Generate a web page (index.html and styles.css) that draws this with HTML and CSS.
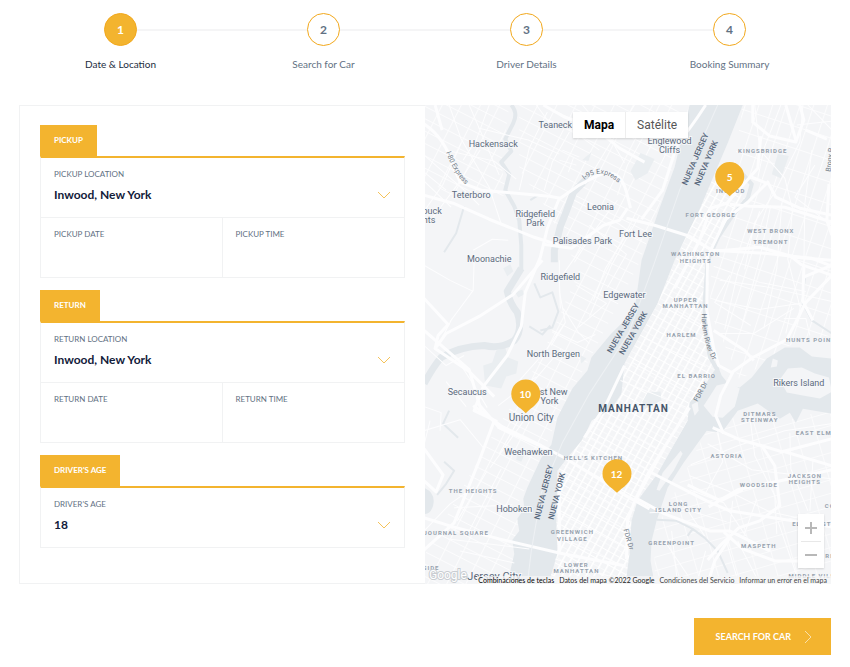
FILE: index.html
```html
<!DOCTYPE html>
<html lang="en">
<head>
<meta charset="utf-8">
<meta name="viewport" content="width=device-width, initial-scale=1">
<title>Car rental booking</title>
<link rel="stylesheet" href="styles.css">
</head>
<body>
<main class="booking">
  <ol class="steps">
    <li class="step step-active"><span class="step-number">1</span><span class="step-name">Date &amp; Location</span></li>
    <li class="step"><span class="step-number">2</span><span class="step-name">Search for Car</span></li>
    <li class="step"><span class="step-number">3</span><span class="step-name">Driver Details</span></li>
    <li class="step"><span class="step-number">4</span><span class="step-name">Booking Summary</span></li>
  </ol>

  <form class="booking-form">
    <div class="panel">
      <div class="fields">
        <section class="group">
          <h2 class="group-title">Pickup</h2>
          <div class="group-body">
            <div class="field field-wide">
              <label for="pickup-location">Pickup location</label>
              <select id="pickup-location"><option>Inwood, New York</option></select>
              <svg class="chevron" viewBox="0 0 14 8" aria-hidden="true"><path d="M1 1l6 6 6-6"/></svg>
            </div>
            <div class="field"><label for="pickup-date">Pickup date</label><input id="pickup-date" type="text"></div>
            <div class="field"><label for="pickup-time">Pickup time</label><input id="pickup-time" type="text"></div>
          </div>
        </section>
        <section class="group">
          <h2 class="group-title">Return</h2>
          <div class="group-body">
            <div class="field field-wide">
              <label for="return-location">Return location</label>
              <select id="return-location"><option>Inwood, New York</option></select>
              <svg class="chevron" viewBox="0 0 14 8" aria-hidden="true"><path d="M1 1l6 6 6-6"/></svg>
            </div>
            <div class="field"><label for="return-date">Return date</label><input id="return-date" type="text"></div>
            <div class="field"><label for="return-time">Return time</label><input id="return-time" type="text"></div>
          </div>
        </section>
        <section class="group">
          <h2 class="group-title">Driver's age</h2>
          <div class="group-body">
            <div class="field field-wide">
              <label for="driver-age">Driver's age</label>
              <select id="driver-age"><option>18</option></select>
              <svg class="chevron" viewBox="0 0 14 8" aria-hidden="true"><path d="M1 1l6 6 6-6"/></svg>
            </div>
          </div>
        </section>
      </div>

      <div class="map">
        <svg class="map-canvas" viewBox="425 105 407 478" preserveAspectRatio="xMidYMid slice">
          <defs>
            <pattern id="avenues" width="7" height="12" patternUnits="userSpaceOnUse" patternTransform="rotate(29)">
              <path d="M0 0V12" stroke="#fff" stroke-width="3"/><path d="M0 0H7M0 6H7" stroke="#fff" stroke-width="1"/>
            </pattern>
            <pattern id="blocks" width="17" height="11" patternUnits="userSpaceOnUse" patternTransform="rotate(27)">
              <path d="M0 0V11M0 0H17" stroke="#fcfcfd" stroke-width="2"/>
            </pattern>
            <pattern id="bronx" width="13" height="21" patternUnits="userSpaceOnUse" patternTransform="rotate(18)">
              <path d="M0 0V21M0 0H13" stroke="#fcfcfd" stroke-width="2"/>
            </pattern>
            <pattern id="queens" width="19" height="13" patternUnits="userSpaceOnUse" patternTransform="rotate(-16)">
              <path d="M0 0V13M0 0H19" stroke="#fbfbfc" stroke-width="2"/>
            </pattern>
            <path id="i95" d="M585 180Q601 166 619 183"/>
            <path id="i80" d="M447 152Q454 172 466 184"/>
            <path id="harlem-drive" d="M702 313Q702 341 714 361"/>
          </defs>

          <rect class="land" x="425" y="105" width="407" height="478"/>

          <path fill="url(#blocks)" d="M425 105H510L502 165 508 195 455 200 425 175ZM520 105H690L672 170 640 262 600 340 558 417 542 457 520 500 515 583H425V555L490 440 540 360 580 270 545 205 520 170Z"/>
          <path fill="url(#bronx)" d="M743 105H832V335L790 345 740 380 710 310 712 255 752 183 735 160Z"/>
          <path fill="url(#queens)" d="M707 430L740 411 785 420 832 408V583H655V530Z"/>
          <path fill="url(#avenues)" d="M712 180L735 160 742 195 710 258 707 330 718 370 690 405 688 425 658 473 638 500 628 583H549L558 470 582 440 625 363 675 260Z"/>

          <g class="marsh">
            <path d="M484 365l9-3 4-12 9-3 3 10 10 4-2 12-10 3-5 12-16-3z"/>
            <path d="M504 268l7-4 3 7-6 5z"/>
            <path d="M641 153l14 6-7 14-12 7-5-9z"/>
            <path d="M778 154l11 2-8 22-9-4z"/>
            <path d="M648 392l13-1 1 9-18 9-1-8z"/>
            <path d="M583 160l9-8-3 9zM516 292l7-3 2 5-6 3zM580 354l7 4-5 5zM518 453l7 1-3 7-5-2z"/>
          </g>

          <g class="water">
            <path d="M690 105H743L728 143 713 178 700 209 688 233 675 260 658 303 625 363 622 393 612 408 592 420 587 431 582 440 568 457 558 470 557 520 558 553 549 583H515L511 570 515 553 513 539 520 530 518 518 525 508 524 498 528 487 542 457 552 444 558 417 573 388 588 370 592 357 611 334 635 310 642 260 660 208 675 167Z"/>
            <path d="M718 365L707 382 690 402 688 420 672 448 658 473 638 500 632 520 630 553 626 583H655L651 560 652 540 657 520 668 487 684 462 707 430 722 432 738 410 758 403 780 418 790 412 796 422 803 408 832 413V358L812 356 800 347 785 347 767 358 752 377 740 387 730 385 722 375Z"/>
            <path d="M425 487q12 5 9 18-3 9-9 8z"/>
          </g>
          <g class="river">
            <path class="river-wide" d="M522 268L508 291Q510 302 518 312 524 329 515 340 501 349 485 345 460 346 442 357 435 365 425 383"/>
            <path d="M512 105Q519 113 514 123L506 139 512 151 502 162 510 174 506 190 515 206 520 220 522 245 522 270"/>
            <path class="river-wide" d="M590 176L574 192 567 211 561 226 555 250 555 262"/>
            <path d="M718 370L710 356 706 331 705 302 708 260 719 236 733 215 748 198 752 184 742 173 727 177"/>
            <path class="stream" d="M805 278L802 301 812 320 832 333M657 519L677 520 693 528 705 537 718 550 728 572M693 528L688 535M535 283l6 14 12-5 6 19-6 16-12 3M551 325l-8 9-13-8M445 461l10 9-8 13-9 11M450 410l-6 13 15 14M539 195l-8 5M465 206l-8 27-12 19"/>
          </g>

          <g class="land">
            <path d="M717 385l13-3 10 6-5 18-12 11-10-1-9-11z"/>
            <path d="M780 379l8-11 14-1 13 6 14 4 3 14-12 7-17-3-16-3z"/>
            <path d="M773 358l5 2-1 6-6 1z"/>
            <path d="M681 450l2 3-9 17-14 20-3-1 6-17z"/>
            <path d="M692 404l6-3 1 9-4 5z"/>
          </g>

          <g class="street">
            <path d="M425 172L447 190M425 181L452 207M425 155L465 190 480 205M425 211L444 184 462 143M434 217L458 185 481 150M450 105L462 139 490 187 502 224M470 105L486 142 500 175M490 105L477 140 464 160M446 150L495 161 517 179M479 128L529 140 560 154M520 190L530 148 548 112M545 190L553 162 570 132M560 160L577 165M563 150L580 157M569 172L574 158"/>
            <path d="M537 105L548 120 572 130 600 150M583 105L610 137 625 163M635 105L606 151 586 184M660 105L642 140 628 165 618 195M575 200L620 224 642 240M618 200L596 229 575 262M610 210L585 244 560 279 561 308M590 225L627 254 608 287M640 215L612 265 590 316M632 226L606 268 594 300"/>
            <path d="M560 260L560 291 566 322 552 345M564 308L579 332 590 343M577 285L607 303 579 327M553 330L578 342 596 334M520 380L545 352 566 322M529 387L562 348M499 405L537 376M500 453L536 390M491 467L526 418M458 520L488 470M470 530L502 468M455 507L513 504M449 538L530 548M461 550L515 562M425 530L451 503 475 486M425 430L461 419 485 448M431 420L425 444M425 406L442 412 441 430"/>
            <path d="M425 265L451 280 474 291M475 259L474 290 451 321M474 250L493 239 509 240M425 345L447 365 465 355M462 365L473 382 488 407M439 345L453 318M447 381L467 406"/>
            <path d="M755 105L760 150 785 178 792 207M781 105L764 149 758 178M803 105L800 142 775 192 755 222 745 269M760 211L738 272 725 329M771 205L760 258 743 322M782 203L777 268 764 328M793 205L788 259 800 306M812 150L805 203 804 265M724 218L712 250M714 266L760 282 806 291M716 300L760 309 800 303M717 333L754 333 794 308M730 275L715 302 751 325"/>
            <path d="M808 105L832 130M797 125L832 121M815 165L795 197 832 225M720 280L764 286 832 301M784 318L806 318 810 335M792 306L786 333M804 288L797 324"/>
            <path d="M691 464L738 445 785 430 832 423M690 475L728 490 770 511 812 520M690 489L724 502 746 535M681 499L705 535M708 443L752 469 832 478M750 415L755 455 775 495 777 533M718 430L723 461 706 492M733 500L728 545 739 583M757 498L744 535M790 432L791 468 808 510M813 460L810 510M665 540L694 583M672 530L678 583M706 550L697 583M738 540L760 583M778 520L797 575M650 512L690 510 727 521"/>
            <path d="M561 474L624 510M558 491L628 530M558 511L626 547M558 535L628 567M556 558L625 580M583 446L643 481M590 436L650 470M606 420L657 448M621 380L690 408M633 362L690 393M646 338L706 366M666 304L708 328"/>
          </g>

          <g class="highway">
            <path d="M425 124Q446 138 454 166L461 182 482 190 550 196 561 198 578 186 597 176Q620 165 627 192L631 208"/>
            <path d="M436 105L443 130M425 195L454 203 490 219 535 237 560 245"/>
            <path d="M544 105L565 117 594 127 620 148 645 162"/>
            <path d="M560 198L548 228 541 257 526 292 522 326 508 355 484 386 475 410 498 421"/>
            <path d="M628 208L620 220 604 225 572 248 544 244M627 218L655 225 690 236 714 251 760 247 795 257 832 260"/>
            <path d="M543 260L514 294 480 316 447 333 436 348 470 371 495 396M436 348L439 335 449 324 425 298M425 330L470 369 482 410"/>
            <path d="M474 405L503 426 542 445 565 457 625 494 650 508"/>
            <path d="M479 403L500 427 545 447M495 420L480 460 455 522 425 549M425 480L437 491 444 474 425 448"/>
            <path d="M425 517L454 526 500 538 560 552 626 565"/>
            <path d="M706 105Q690 130 678 143L663 190 642 219"/>
            <path d="M753 105V122L770 136 796 142 804 120 800 105M761 136L758 168 727 203 711 208 700 240 675 288"/>
            <path d="M752 177L769 184 776 197 800 208 832 215M769 181L748 202 726 219 708 256 707 309 714 348 719 365 732 372 753 357 787 339 806 302 832 275"/>
            <path d="M730 204L750 206 785 207 832 222M713 250L765 253 812 258 832 266M829 184L827 220 832 235"/>
            <path d="M786 105L796 140M806 130L827 139M804 265L803 301 813 320M803 277L832 265M790 255L801 264 832 275"/>
            <path d="M714 330L745 350 754 360M733 372L721 395 716 415 724 433"/>
            <path d="M713 427L740 439 762 445 782 451 832 438M762 445L775 465 780 505 760 520 739 527 720 545 708 559"/>
            <path d="M650 471L707 500 730 510 832 526M636 497L665 513 710 530 730 530 770 550M709 506L738 489 832 469"/>
            <path d="M730 537L715 560 708 583M724 531L743 548 775 560 805 560M688 484L721 500 743 489M785 451L832 465"/>
            <path d="M690 407L670 438 649 472 636 498 628 520 627 558"/>
            <path d="M625 365L606 405 585 437M560 475L560 550"/>
          </g>
          <path class="state-line" d="M718 105L680 190 654 265 629 333 590 393 563 442 542 492 532 550 528 583"/>

          <g class="town">
            <text x="556" y="128">Teaneck</text>
            <text x="494" y="147">Hackensack</text>
            <text x="670" y="144">Englewood</text><text x="670" y="153">Cliffs</text>
            <text x="472" y="198">Teterboro</text>
            <text x="601" y="210">Leonia</text>
            <text x="433" y="214">buck</text><text x="430" y="223">hts</text>
            <text x="536" y="217">Ridgefield</text><text x="536" y="226">Park</text>
            <text x="636" y="237">Fort Lee</text>
            <text x="583" y="244">Palisades Park</text>
            <text x="490" y="262">Moonachie</text>
            <text x="561" y="280">Ridgefield</text>
            <text x="625" y="298">Edgewater</text>
            <text x="554" y="356">North Bergen</text>
            <text x="468" y="394">Secaucus</text>
            <text x="548" y="394">West New</text><text x="550" y="403">York</text>
            <text x="529" y="454">Weehawken</text>
            <text x="515" y="511">Hoboken</text>
            <text x="799" y="385">Rikers Island</text>
            <text class="town-large" x="532" y="420">Union City</text>
            <text class="city" x="495" y="579">Jersey City</text>
          </g>
          <g class="district">
            <text x="763" y="153">KINGSBRIDGE</text>
            <text x="731" y="193">INWOOD</text>
            <text x="711" y="217">FORT GEORGE</text>
            <text x="771" y="233">WEST BRONX</text>
            <text x="771" y="244">TREMONT</text>
            <text x="696" y="256">WASHINGTON</text><text x="696" y="263">HEIGHTS</text>
            <text x="686" y="302">UPPER</text><text x="686" y="308">MANHATTAN</text>
            <text x="682" y="337">HARLEM</text>
            <text x="811" y="342">HUNTS POINT</text>
            <text x="697" y="377">EL BARRIO</text>
            <text x="760" y="415">DITMARS</text><text x="760" y="421">STEINWAY</text>
            <text x="826" y="434">EAST ELMHURST</text>
            <text x="727" y="457">ASTORIA</text>
            <text x="594" y="459">HELL'S KITCHEN</text>
            <text x="805" y="477">JACKSON</text><text x="805" y="483">HEIGHTS</text>
            <text x="759" y="486">WOODSIDE</text>
            <text x="474" y="492">THE HEIGHTS</text>
            <text x="679" y="505">LONG</text><text x="679" y="511">ISLAND CITY</text>
            <text x="812" y="525">ELMHURST</text>
            <text x="457" y="534">JOURNAL SQUARE</text>
            <text x="573" y="533">GREENWICH</text><text x="573" y="540">VILLAGE</text>
            <text x="672" y="544">GREENPOINT</text>
            <text x="759" y="547">MASPETH</text>
            <text x="577" y="566">LOWER</text><text x="577" y="572">MANHATTAN</text>
            <text x="432" y="569">SIDE</text>
            <text x="830" y="507">CO</text>
            <text x="830" y="557">RE</text>
            <text x="819" y="577">MIDDLE VILLAGE</text>
          </g>
          <text class="borough" x="634" y="411">MANHATTAN</text>
          <g class="state">
            <text transform="translate(698 160) rotate(-67)">NUEVA JERSEY</text>
            <text transform="translate(709 164) rotate(-67)">NUEVA YORK</text>
            <text transform="translate(626 329) rotate(-60)">NUEVA JERSEY</text>
            <text transform="translate(636 334) rotate(-60)">NUEVA YORK</text>
            <text transform="translate(547 492) rotate(-76)">NUEVA JERSEY</text>
            <text transform="translate(560 496) rotate(-76)">NUEVA YORK</text>
          </g>
          <g class="road-name">
            <text><textPath href="#i95">I-95 Express</textPath></text>
            <text><textPath href="#i80">I-80 Express</textPath></text>
            <text><textPath href="#harlem-drive">Harlem River Dr</textPath></text>
            <text class="road-straight" transform="translate(703 392) rotate(-62)">FDR Dr</text>
            <text class="road-straight" transform="translate(627 539) rotate(74)">FDR Dr</text>
            <text class="road-straight" transform="translate(832 160) rotate(-83)">Bronx R</text>
          </g>

          <g class="pin">
            <path d="M730 196C724 190 715.500 186 715.500 176.500A14.500 14.500 0 0 1 744.500 176.500C744.500 186 736 190 730 196Z"/><text x="730" y="181">5</text>
            <path d="M526.500 412.500C520.500 406.500 512 403 512 393.500A14.500 14.500 0 0 1 541 393.500C541 403 532.500 406.500 526.500 412.500Z"/><text x="526" y="397">10</text>
            <path d="M617.500 492C611.500 486 603 482.500 603 473A14.500 14.500 0 0 1 632 473C632 482.500 623.500 486 617.500 492Z"/><text x="617" y="477">12</text>
          </g>
        </svg>

        <div class="map-types">
          <button class="map-type map-type-active" type="button">Mapa</button>
          <button class="map-type" type="button">Satélite</button>
        </div>
        <div class="map-zoom">
          <button type="button" aria-label="Zoom in"><svg viewBox="0 0 14 14"><path d="M7 1V13M1 7H13"/></svg></button>
          <button type="button" aria-label="Zoom out"><svg viewBox="0 0 14 14"><path d="M1 7H13"/></svg></button>
        </div>
        <span class="map-logo">Google</span>
        <div class="map-credits">
          <button type="button">Combinaciones de teclas</button>
          <span>Datos del mapa ©2022 Google</span>
          <a href="#">Condiciones del Servicio</a>
          <a href="#">Informar un error en el mapa</a>
        </div>
      </div>
    </div>

    <div class="actions">
      <button class="submit" type="submit">Search for car
        <svg viewBox="0 0 8 14" aria-hidden="true"><path d="M1 1l6 6-6 6"/></svg>
      </button>
    </div>
  </form>
</main>
</body>
</html>
```
FILE: styles.css
```css
* {
  box-sizing: border-box;
}

body {
  margin: 0;
  background: #fff;
  color: #627183;
  font-family: Lato, "Liberation Sans", sans-serif;
}

button,
input,
select {
  font-family: inherit;
  border: 0;
  border-radius: 0;
  padding: 0;
  background: none;
}

button {
  cursor: pointer;
}

.booking {
  padding: 13px 19px;
}

/* Progress steps */
.steps {
  display: grid;
  grid-template-columns: repeat(4, 1fr);
  margin: 0;
  padding: 0;
  list-style: none;
}

.step {
  display: grid;
  grid-template-columns: 1fr 33px 1fr;
  align-items: center;
  row-gap: 10px;
}

.step::before,
.step::after {
  content: "";
  height: 2px;
  grid-row: 1;
  background: #f5f5f6;
}

.step::before {
  grid-column: 1;
}

.step::after {
  grid-column: 3;
}

.step:first-child::before,
.step:last-child::after {
  visibility: hidden;
}

.step-number {
  grid-area: 1 / 2;
  height: 33px;
  border: 1px solid #f2a81c;
  border-radius: 50%;
  font-size: 12px;
  font-weight: 700;
  line-height: 32px;
  text-align: center;
}

.step-name {
  grid-area: 2 / 1 / 3 / 4;
  font-size: 10px;
  line-height: 16px;
  text-align: center;
}

.step-active .step-number {
  background: #f3b42f;
  color: #fff;
}

.step-active .step-name {
  color: #1c2c40;
}

/* Booking panel */
.panel {
  display: grid;
  grid-template-columns: 1fr 1fr;
  margin-top: 33px;
}

.fields {
  display: flex;
  flex-direction: column;
  gap: 12px;
  padding: 19px 20px 35px;
  border: 1px solid #f1f2f3;
  border-right: 0;
}

.group-title {
  width: fit-content;
  margin: 0;
  padding: 0 14px;
  background: #f3b42f;
  color: #fff;
  font-size: 8px;
  font-weight: 700;
  line-height: 31px;
  text-transform: uppercase;
}

.group-body {
  display: grid;
  grid-template-columns: 1fr 1fr;
  border: 1px solid #f1f2f3;
  border-top: 2px solid #f3b42f;
  border-bottom: 0;
}

.field {
  position: relative;
  display: flex;
  flex-direction: column;
  gap: 6px;
  padding: 10px 13px 14px;
  border-bottom: 1px solid #f1f2f3;
}

.field-wide {
  grid-column: 1 / -1;
}

.field-wide + .field {
  border-right: 1px solid #f1f2f3;
}

.field label {
  font-size: 8px;
  line-height: 12px;
  text-transform: uppercase;
}

.field input,
.field select {
  width: 100%;
  height: 17px;
  appearance: none;
  color: #12203a;
  font-size: 12px;
  font-weight: 700;
  line-height: 17px;
}

.chevron {
  position: absolute;
  right: 13px;
  bottom: 18px;
  width: 14px;
  height: 8px;
  fill: none;
  stroke: #f5c35a;
  pointer-events: none;
}

/* Map */
.map {
  position: relative;
  overflow: hidden;
  font-family: Roboto, "Liberation Sans", sans-serif;
}

.map-canvas {
  position: absolute;
  inset: 0;
  width: 100%;
  height: 100%;
}

.land {
  fill: #f4f5f7;
}

.marsh {
  fill: #eaeef1;
}

.water {
  fill: #e3e8ec;
}

.river {
  fill: none;
  stroke: #e3e8ec;
  stroke-width: 4;
  stroke-linejoin: round;
}

.river-wide {
  stroke-width: 7;
}

.stream {
  stroke-width: 2;
}

.street,
.highway {
  fill: none;
  stroke: #fdfdfe;
  stroke-linejoin: round;
}

.street {
  stroke-width: 1;
}

.highway {
  stroke-width: 3;
}

.state-line {
  fill: none;
  stroke: #eef1f4;
}

.town,
.district,
.borough,
.state,
.road-straight,
.pin {
  text-anchor: middle;
}

.town {
  fill: #5c6b7d;
  stroke: #f6f7f9;
  stroke-width: 2px;
  paint-order: stroke;
  font-size: 9px;
}

.town-large {
  font-size: 10px;
}

.city {
  font-size: 11px;
}

.district {
  fill: #97a2ae;
  font-size: 6px;
  font-weight: 700;
  letter-spacing: 1px;
}

.borough {
  fill: #46566a;
  font-size: 10px;
  font-weight: 700;
  letter-spacing: 1px;
}

.state {
  fill: #55657a;
  font-size: 8px;
  font-weight: 500;
}

.road-name {
  fill: #717b87;
  font-size: 7px;
}

.pin path {
  fill: #f3b42f;
}

.pin text {
  fill: #fff;
  font-family: Lato, sans-serif;
  font-size: 10px;
  font-weight: 700;
}

.map-types {
  position: absolute;
  top: 7px;
  left: 148px;
  display: flex;
  background: #fff;
  box-shadow: 0 1px 2px rgba(0, 0, 0, 0.15);
}

.map-type {
  padding: 0 11px;
  color: #565656;
  font-size: 12px;
  line-height: 26px;
}

.map-type + .map-type {
  border-left: 1px solid #eee;
}

.map-type-active {
  color: #000;
  font-weight: 700;
}

.map-zoom {
  position: absolute;
  right: 7px;
  bottom: 16px;
  display: flex;
  flex-direction: column;
  width: 26px;
  padding: 0 3px;
  background: #fff;
  box-shadow: 0 1px 2px rgba(0, 0, 0, 0.15);
}

.map-zoom button {
  display: grid;
  place-items: center;
  height: 27px;
}

.map-zoom button + button {
  border-top: 1px solid #e8e8e8;
}

.map-zoom svg {
  width: 14px;
  height: 14px;
  stroke: #b8b8b8;
  stroke-width: 2;
}

.map-logo {
  position: absolute;
  bottom: 0;
  left: 4px;
  color: #fff;
  font-size: 12px;
  line-height: 17px;
  -webkit-text-stroke: 2px #c9cdd2;
  paint-order: stroke;
}

.map-credits {
  position: absolute;
  right: 0;
  bottom: 0;
  display: flex;
  gap: 5px;
  padding: 0 4px 0 1px;
  background: rgba(245, 245, 247, 0.75);
  color: #222;
  font-family: Lato, sans-serif;
  font-size: 7px;
  line-height: 8px;
  white-space: nowrap;
}

.map-credits button {
  color: #000;
  font-size: 7px;
  line-height: 8px;
}

.map-credits a {
  color: #444;
  text-decoration: none;
}

/* Footer action */
.actions {
  display: flex;
  justify-content: flex-end;
  margin-top: 34px;
}

.submit {
  display: flex;
  align-items: center;
  gap: 13px;
  padding: 0 19px 0 22px;
  background: #f3b42f;
  color: #fff;
  font-size: 9px;
  font-weight: 700;
  line-height: 37px;
  text-transform: uppercase;
}

.submit svg {
  width: 8px;
  height: 14px;
  fill: none;
  stroke: #fae0a8;
}
```
